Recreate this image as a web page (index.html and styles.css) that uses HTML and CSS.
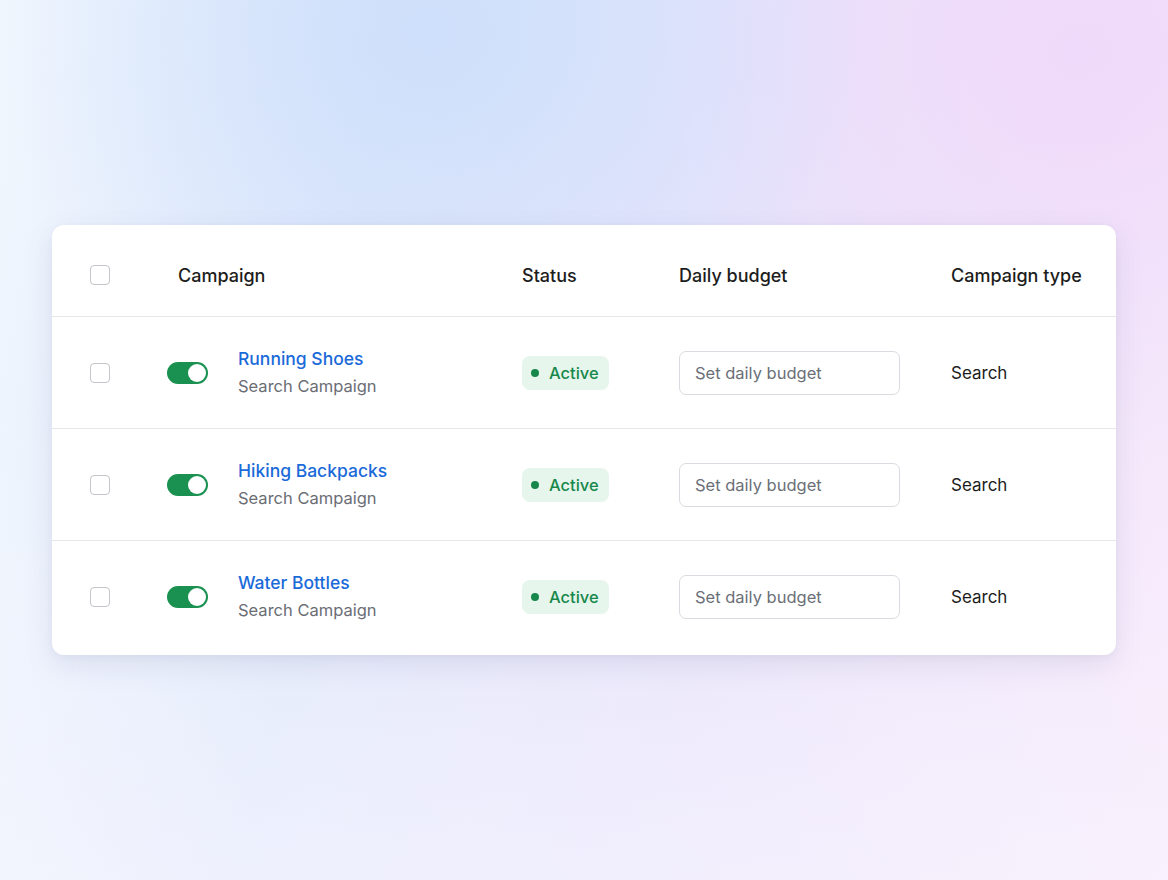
FILE: index.html
```html
<!DOCTYPE html>
<html lang="en">
<head>
<meta charset="utf-8">
<title>Campaigns</title>
<link rel="stylesheet" href="styles.css">
</head>
<body>
<div class="page">
  <div class="card">
    <div class="row head">
      <div class="cell"><span class="checkbox"></span></div>
      <div class="cell title-campaign">Campaign</div>
      <div class="cell">Status</div>
      <div class="cell">Daily budget</div>
      <div class="cell">Campaign type</div>
    </div>
    <div class="row">
      <div class="cell"><span class="checkbox"></span></div>
      <div class="cell campaign">
        <span class="toggle"><span class="knob"></span></span>
        <div class="names">
          <a class="name">Running Shoes</a>
          <span class="sub">Search Campaign</span>
        </div>
      </div>
      <div class="cell"><span class="badge"><span class="dot"></span>Active</span></div>
      <div class="cell"><input class="budget" type="text" placeholder="Set daily budget"></div>
      <div class="cell type">Search</div>
    </div>
    <div class="row">
      <div class="cell"><span class="checkbox"></span></div>
      <div class="cell campaign">
        <span class="toggle"><span class="knob"></span></span>
        <div class="names">
          <a class="name">Hiking Backpacks</a>
          <span class="sub">Search Campaign</span>
        </div>
      </div>
      <div class="cell"><span class="badge"><span class="dot"></span>Active</span></div>
      <div class="cell"><input class="budget" type="text" placeholder="Set daily budget"></div>
      <div class="cell type">Search</div>
    </div>
    <div class="row last">
      <div class="cell"><span class="checkbox"></span></div>
      <div class="cell campaign">
        <span class="toggle"><span class="knob"></span></span>
        <div class="names">
          <a class="name">Water Bottles</a>
          <span class="sub">Search Campaign</span>
        </div>
      </div>
      <div class="cell"><span class="badge"><span class="dot"></span>Active</span></div>
      <div class="cell"><input class="budget" type="text" placeholder="Set daily budget"></div>
      <div class="cell type">Search</div>
    </div>
  </div>
</div>
</body>
</html>
```
FILE: styles.css
```css
* { box-sizing: border-box; }
html, body { margin: 0; padding: 0; }
body {
  width: 1168px;
  height: 880px;
  overflow: hidden;
  font-family: Inter, "Noto Sans", "Liberation Sans", sans-serif;
  background:
    linear-gradient(180deg, rgba(255,255,255,0) 0%, rgba(255,255,255,0) 45%, rgba(250,248,255,0.55) 100%),
    radial-gradient(ellipse 440px 380px at 430px 30px, rgba(205,223,251,0.95), rgba(205,223,251,0) 100%),
    radial-gradient(ellipse 420px 380px at 1080px 50px, rgba(240,216,250,0.9), rgba(240,216,250,0) 100%),
    linear-gradient(100deg, #f1f7fe 0%, #dfe8fb 30%, #e7e3fb 60%, #f7e8fb 100%);
}
.page {
  padding-top: 225px;
  padding-left: 52px;
}
.card {
  width: 1064px;
  background: #ffffff;
  border-radius: 12px;
  box-shadow: 0 10px 28px rgba(110, 110, 150, 0.14), 0 2px 6px rgba(110, 110, 150, 0.06);
  padding-bottom: 3px;
}
.row {
  display: grid;
  grid-template-columns: 77px 355px 157px 272px 165px;
  align-items: center;
  height: 112px;
  border-top: 1px solid #e6e7eb;
  padding-left: 38px;
}
.row.head {
  border-top: none;
  height: 91px;
  padding-top: 9px;
  font-size: 18px;
  font-weight: 500;
  color: #1d1d20;
}
.cell { display: flex; align-items: center; }
.title-campaign { padding-left: 11px; }
.checkbox {
  display: block;
  width: 20px;
  height: 20px;
  border: 1.5px solid #c4c5ca;
  border-radius: 4px;
  background: #fff;
}
.campaign { gap: 30px; }
.toggle {
  position: relative;
  display: block;
  width: 41px;
  height: 22px;
  border-radius: 11px;
  background: #1a9150;
  flex: none;
}
.knob {
  position: absolute;
  top: 2px;
  right: 2px;
  width: 18px;
  height: 18px;
  border-radius: 50%;
  background: #ffffff;
}
.names { display: flex; flex-direction: column; }
.name {
  font-size: 17.5px;
  line-height: 26px;
  font-weight: 500;
  color: #1a6ad9;
}
.sub {
  font-size: 16.5px;
  line-height: 28px;
  color: #6a6d74;
}
.badge {
  display: flex;
  align-items: center;
  height: 34px;
  padding: 0 10px 0 9px;
  gap: 10px;
  border-radius: 8px;
  background: #e7f6ed;
  color: #17884b;
  font-size: 16.5px;
  font-weight: 500;
}
.dot {
  width: 8px;
  height: 8px;
  border-radius: 50%;
  background: #17884b;
}
.budget {
  width: 221px;
  height: 44px;
  border: 1px solid #d9dbe1;
  border-radius: 7px;
  padding: 0 15px;
  font-family: inherit;
  font-size: 16.5px;
  color: #1d1d20;
  background: #fff;
  outline: none;
}
.budget::placeholder { color: #6b6f78; }
.type {
  font-size: 17px;
  color: #1d1d20;
}
```
